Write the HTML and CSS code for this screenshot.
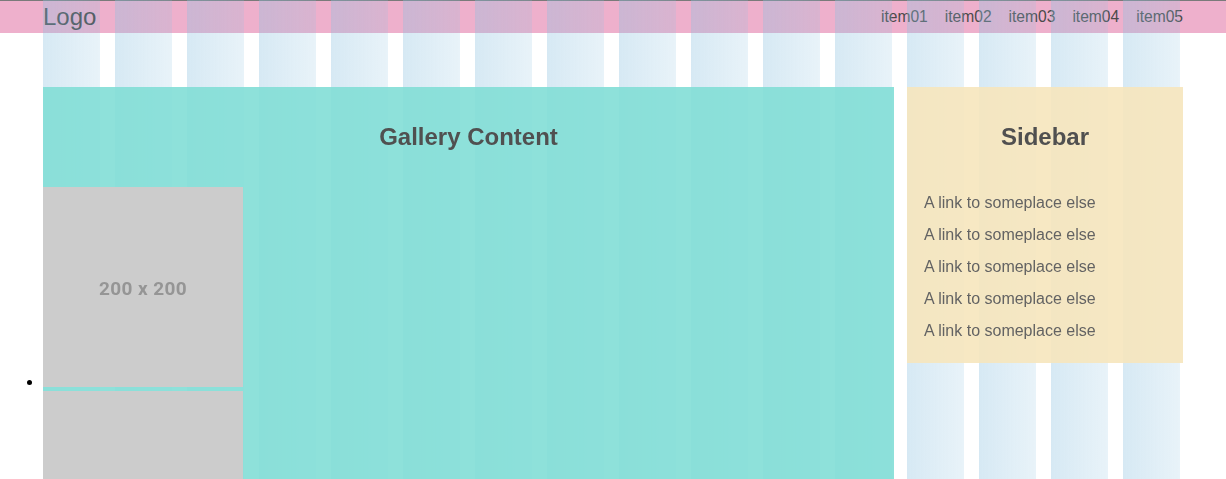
FILE: index.html
```html
<!DOCTYPE html>
<html lang="en">
<head>
<meta charset="utf-8">
<title>Gallery</title>
<link rel="stylesheet" href="styles.css">
</head>
<body>
<header class="site-header">
  <div class="header-inner">
    <div class="logo">Logo</div>
    <nav class="nav">
      <a class="nav-item" href="#">item01</a>
      <a class="nav-item" href="#">item02</a>
      <a class="nav-item" href="#">item03</a>
      <a class="nav-item" href="#">item04</a>
      <a class="nav-item" href="#">item05</a>
    </nav>
  </div>
</header>
<div class="grid-overlay" aria-hidden="true"></div>
<main class="page">
  <section class="gallery">
    <h2 class="block-title">Gallery Content</h2>
    <ul class="gallery-list">
      <li class="gallery-item"><span class="placeholder">200 x 200</span></li>
      <li class="gallery-item"><span class="placeholder">200 x 200</span></li>
    </ul>
  </section>
  <aside class="sidebar">
    <h2 class="block-title">Sidebar</h2>
    <ul class="side-links">
      <li><a href="#">A link to someplace else</a></li>
      <li><a href="#">A link to someplace else</a></li>
      <li><a href="#">A link to someplace else</a></li>
      <li><a href="#">A link to someplace else</a></li>
      <li><a href="#">A link to someplace else</a></li>
    </ul>
  </aside>
</main>
</body>
</html>
```
FILE: styles.css
```css
html {
  overflow: hidden;
}
body {
  margin: 0;
  background: #fff;
  font-family: "Liberation Sans", Arial, Helvetica, sans-serif;
  color: #000;
}
a {
  color: inherit;
  text-decoration: none;
}

/* header */
.site-header {
  position: relative;
  z-index: 0;
  height: 32px;
  border-top: 1px solid #7a7a7a;
  background: #eeb0cc;
}
.header-inner {
  width: 1140px;
  margin: 0 auto;
  display: flex;
  justify-content: space-between;
  align-items: center;
  height: 32px;
}
.logo {
  font-size: 24px;
  line-height: 32px;
  color: #444;
}
.nav {
  display: flex;
  gap: 17px;
}
.nav-item {
  font-size: 15.6px;
  line-height: 32px;
  color: #4a4a4a;
}

/* grid overlay */
.grid-overlay {
  position: fixed;
  top: 0;
  bottom: 0;
  left: 50%;
  width: 1137px;
  margin-left: -570px;
  z-index: 1;
  pointer-events: none;
  background-image: linear-gradient(to right, rgba(142, 194, 224, 0.36) 0, rgba(142, 194, 224, 0.2) 57px, transparent 57px);
  background-size: 72px 100%;
  background-repeat: repeat-x;
}

/* main */
.page {
  position: relative;
  z-index: 2;
  width: 1140px;
  margin: 0 auto;
  padding-top: 54px;
  display: flex;
  gap: 13px;
  align-items: flex-start;
}
.block-title {
  margin: 0;
  font-size: 24px;
  font-weight: bold;
  line-height: 100px;
  text-align: center;
  color: #505050;
}
.gallery {
  width: 851px;
  background: rgba(130, 222, 214, 0.9);
}
.gallery-list {
  margin: 0;
  padding: 0;
  font-size: 16px;
  color: #000;
}
.gallery-item {
  line-height: normal;
}
.placeholder {
  display: inline-block;
  overflow: hidden;
  box-sizing: border-box;
  width: 200px;
  height: 200px;
  padding-top: 4px;
  line-height: 196px;
  text-align: center;
  background: #cccccc;
  color: #959595;
  font-family: Roboto, "Liberation Sans", sans-serif;
  font-weight: bold;
  font-size: 19px;
  letter-spacing: 0.4px;
}
.sidebar {
  width: 276px;
  background: rgba(246, 230, 189, 0.9);
  padding-bottom: 16px;
}
.side-links {
  list-style: none;
  margin: 0;
  padding: 0 17px;
}
.side-links li {
  font-size: 16px;
  line-height: 32px;
  color: #636363;
}
```
